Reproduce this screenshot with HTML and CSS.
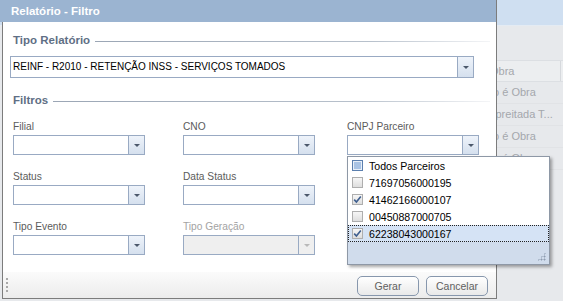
FILE: index.html
```html
<!DOCTYPE html>
<html lang="pt-BR">
<head>
    <meta charset="UTF-8">
    <title>Relatório - Filtro</title>
    <link rel="stylesheet" href="styles.css">
</head>
<body>
    <div class="app">
        <div class="app-top"></div>
        <div class="app-tools"></div>
        <div class="app-grid">
            <div class="grid-head"><span class="head-text">Obra</span><span class="col-sep"></span></div>
            <div class="grid-row">Não é Obra</div>
            <div class="grid-row">Empreitada T...</div>
            <div class="grid-row">Não é Obra</div>
            <div class="grid-row">Não é Obra</div>
        </div>
    </div>

    <div class="dialog">
        <div class="dialog-title">Relatório - Filtro</div>

        <div class="dialog-body">
            <div class="group">
                <div class="legend"><span>Tipo Relatório</span></div>
                <div class="combo combo-wide">
                    <span class="combo-text">REINF - R2010 - RETENÇÃO INSS - SERVIÇOS TOMADOS</span>
                    <span class="trigger"></span>
                </div>
            </div>

            <div class="group group-filters">
                <div class="legend"><span>Filtros</span></div>
                <div class="fields">
                    <div class="field">
                        <label>Filial</label>
                        <div class="combo"><span class="combo-text"></span><span class="trigger"></span></div>
                    </div>
                    <div class="field">
                        <label>CNO</label>
                        <div class="combo"><span class="combo-text"></span><span class="trigger"></span></div>
                    </div>
                    <div class="field">
                        <label>CNPJ Parceiro</label>
                        <div class="combo"><span class="combo-text"></span><span class="trigger"></span></div>
                    </div>
                    <div class="field">
                        <label>Status</label>
                        <div class="combo"><span class="combo-text"></span><span class="trigger"></span></div>
                    </div>
                    <div class="field">
                        <label>Data Status</label>
                        <div class="combo"><span class="combo-text"></span><span class="trigger"></span></div>
                    </div>
                    <div class="field"></div>
                    <div class="field">
                        <label>Tipo Evento</label>
                        <div class="combo"><span class="combo-text"></span><span class="trigger"></span></div>
                    </div>
                    <div class="field disabled">
                        <label>Tipo Geração</label>
                        <div class="combo"><span class="combo-text"></span><span class="trigger"></span></div>
                    </div>
                </div>
            </div>
        </div>

        <div class="dialog-footer">
            <span class="grip"><i></i><i></i><i></i><i></i></span>
            <button class="btn">Gerar</button>
            <button class="btn">Cancelar</button>
        </div>

        <!-- lista aberta do combo CNPJ Parceiro -->
        <div class="dropdown">
            <div class="option">
                <span class="check check-all"></span>Todos Parceiros
            </div>
            <div class="option">
                <span class="check"></span>71697056000195
            </div>
            <div class="option">
                <span class="check"><svg width="9" height="9" viewBox="0 0 9 9"><path d="M1.2 4.6 L3.4 7 L7.8 1.4" fill="none" stroke="#3f5f8f" stroke-width="1.6"/></svg></span>41462166000107
            </div>
            <div class="option">
                <span class="check"></span>00450887000705
            </div>
            <div class="option selected">
                <span class="check"><svg width="9" height="9" viewBox="0 0 9 9"><path d="M1.2 4.6 L3.4 7 L7.8 1.4" fill="none" stroke="#3f5f8f" stroke-width="1.6"/></svg></span>62238043000167
            </div>
            <div class="dropdown-foot"><span class="resize"></span></div>
        </div>
    </div>
</body>
</html>
```

FILE: styles.css
```css
body {
    margin: 0;
    font-family: 'Liberation Sans', Arial, sans-serif;
    font-size: 10.5px;
    color: #000;
    background-color: #e7e9ec;
    overflow: hidden;
}

/* pagina por tras da janela (mascarada) */
.app {
    display: flex;
    flex-direction: column;
    height: 301px;
}

.app-top {
    height: 25px;
    background-color: #cfdff1;
    border-bottom: 1px solid #e4ebf3;
}

.app-tools {
    height: 34px;
    background-color: #e7e9ec;
}

.app-grid {
    display: flex;
    flex-direction: column;
    padding-left: 479px;
    color: #a4a7ac;
    font-size: 11px;
}

.grid-head {
    display: flex;
    align-items: center;
    height: 20px;
    border-top: 1px solid #dcdfe3;
    border-bottom: 1px solid #dcdfe3;
    background-color: #eceef0;
}

.head-text {
    padding-left: 11px;
    width: 70px;
}

.col-sep {
    width: 1px;
    height: 20px;
    background-color: #d6d9dd;
}

.grid-row {
    height: 21px;
    line-height: 21px;
    border-bottom: 1px solid #e1e3e6;
    white-space: nowrap;
}

/* janela */
.dialog {
    position: absolute;
    left: 2px;
    top: 0;
    width: 493px;
    height: 298px;
    display: flex;
    flex-direction: column;
    background-color: #fff;
    border-left: 1px solid #7c7c7c;
    border-right: 1px solid #7c7c7c;
    border-bottom: 1px solid #7c7c7c;
}

.dialog-title {
    height: 22px;
    line-height: 22px;
    margin-left: -3px;
    padding-left: 11px;
    background-color: #9bb4d1;
    color: #fff;
    font-weight: bold;
    font-size: 11.5px;
}

.dialog-body {
    flex: 1;
    padding: 11px 6px 0 7px;
}

.legend {
    display: flex;
    align-items: center;
    height: 14px;
    color: #5f6f85;
    font-weight: bold;
    font-size: 11.5px;
}

.legend span {
    padding-left: 3px;
    padding-right: 5px;
}

.legend::after {
    content: "";
    flex: 1;
    height: 1px;
    margin-top: 2px;
    background: linear-gradient(to right, #9ba6b5, #b8c1cc 70%, #f4f5f7);
}

.combo {
    display: flex;
    width: 130px;
    height: 18px;
    border: 1px solid #99aac3;
    background-color: #fff;
}

.combo-wide {
    width: 462px;
    height: 20px;
    margin-top: 9px;
}

.combo-text {
    flex: 1;
    padding-left: 2px;
    line-height: 20px;
    font-size: 10px;
    white-space: nowrap;
    overflow: hidden;
}

.trigger {
    width: 15px;
    border-left: 1px solid #99aac3;
    background: linear-gradient(#eef3fa, #d5e0ee) no-repeat;
    position: relative;
}

.trigger::after {
    content: "";
    position: absolute;
    left: 5px;
    top: 50%;
    margin-top: -1px;
    border-left: 3px solid transparent;
    border-right: 3px solid transparent;
    border-top: 3px solid #4b586b;
}

.group-filters {
    margin-top: 15px;
}

.fields {
    display: grid;
    grid-template-columns: 170px 164px 130px;
    row-gap: 15px;
    padding-left: 3px;
    margin-top: 13px;
}

.field label {
    display: block;
    height: 13px;
    line-height: 13px;
    margin-bottom: 2px;
    font-size: 10.2px;
    color: #5b5b5b;
}

.disabled label {
    color: #a3a3a3;
}

.disabled .combo,
.disabled .trigger {
    background: #efefef;
}

.disabled .trigger::after {
    border-top-color: #b9b9b9;
}

/* rodape */
.dialog-footer {
    display: flex;
    align-items: flex-start;
    justify-content: flex-end;
    gap: 7px;
    height: 26px;
    padding: 4px 8px 0 0;
    box-sizing: border-box;
    background: linear-gradient(#fbfbfb, #ececec);
    position: relative;
}

.grip {
    position: absolute;
    left: 3px;
    top: 6px;
    display: flex;
    flex-direction: column;
    gap: 2px;
}

.grip i {
    display: block;
    width: 2px;
    height: 2px;
    background-color: #a8a8a8;
}

.btn {
    width: 62px;
    height: 20px;
    padding: 0;
    font-family: 'Liberation Sans', Arial, sans-serif;
    font-size: 10.5px;
    color: #5f5f5f;
    border: 1px solid #8797ad;
    border-radius: 5px;
    background: linear-gradient(#ffffff, #e9e9e9);
}

/* lista do combo */
.dropdown {
    position: absolute;
    left: 344px;
    top: 156px;
    width: 201px;
    height: 107px;
    display: flex;
    flex-direction: column;
    background-color: #fff;
    border: 1px solid #8e98a6;
    box-shadow: 2px 2px 3px rgba(0, 0, 0, 0.35);
    font-size: 10.6px;
}

.option {
    display: flex;
    align-items: center;
    height: 17px;
    padding-left: 4px;
    box-sizing: border-box;
    white-space: nowrap;
}

.option.selected {
    background-color: #d5e3f5;
    border: 1px dotted #222;
    padding-left: 3px;
}

.check {
    display: flex;
    align-items: center;
    justify-content: center;
    width: 9px;
    height: 9px;
    margin-right: 6px;
    border: 1px solid #aeaeae;
    background: linear-gradient(#f6f6f6, #dedede);
}

.check-all {
    border-color: #5b7fae;
    background: #a9c3e4;
    box-shadow: inset 0 0 0 1px #e8eff8;
}

.dropdown-foot {
    flex: 1;
    background-color: #d0dcec;
    position: relative;
}

.resize {
    position: absolute;
    right: 3px;
    bottom: 3px;
    width: 9px;
    height: 9px;
    background:
        radial-gradient(circle, #8d9cb0 0.8px, transparent 1.2px) 0 0 / 3px 3px;
    clip-path: polygon(100% 0, 100% 100%, 0 100%);
}
```
